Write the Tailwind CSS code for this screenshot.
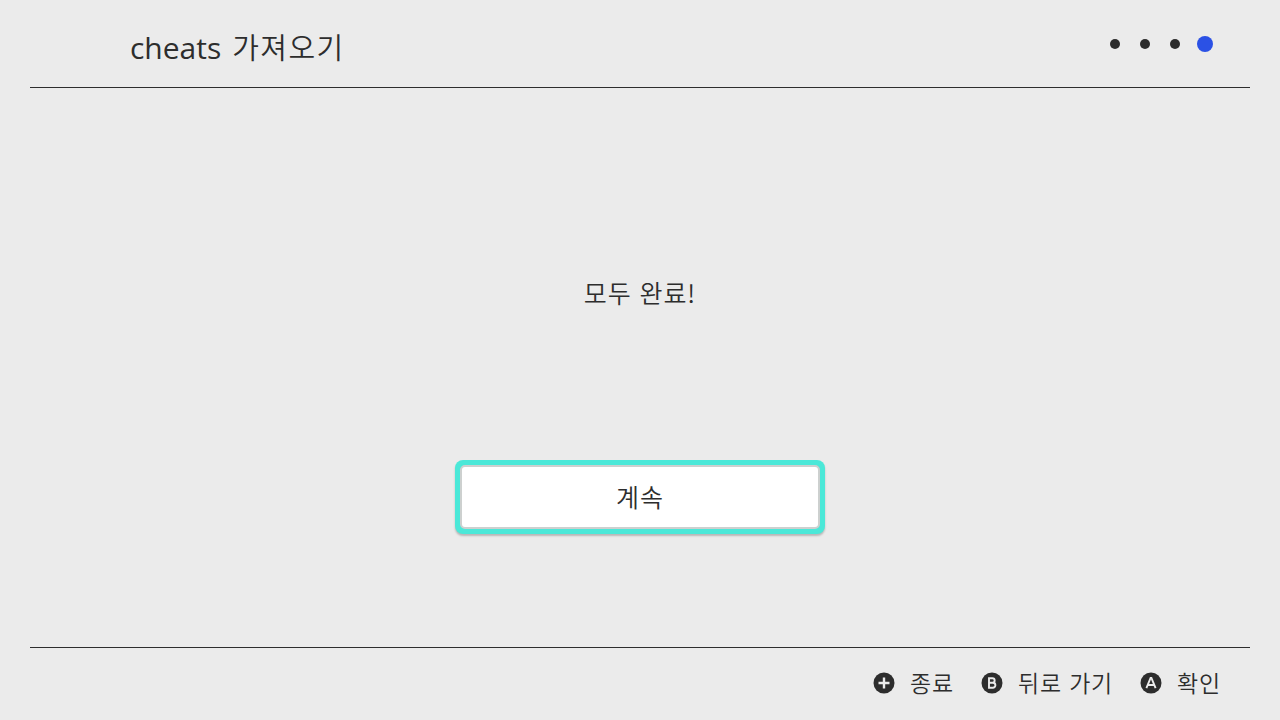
<!DOCTYPE html>
<html lang="ko">
<head>
  <meta charset="UTF-8">
  <title>cheats 가져오기</title>
  <script src="https://cdn.jsdelivr.net/npm/@tailwindcss/browser@4"></script>
</head>
<body class="bg-[#ebebeb] text-[#2d2d2d] font-['Noto_Sans_CJK_KR',sans-serif] font-[350] w-[1280px] h-screen px-[30px] flex flex-col overflow-hidden">

  <header class="h-[88px] shrink-0 border-b border-[#2d2d2d] flex justify-between pl-[100px] pr-[37px]">
    <h1 class="text-[29px] leading-[44px] pt-[24px] whitespace-pre"><span class="font-['Open_Sans'] font-normal text-[30px]">cheats</span><span class="ml-[11px] tracking-[1.4px]">가져오기</span></h1>
    <div class="flex items-center gap-5 h-4 mt-9">
      <span class="size-[10px] rounded-full bg-[#2d2d2d]"></span>
      <span class="size-[10px] rounded-full bg-[#2d2d2d]"></span>
      <span class="size-[10px] rounded-full bg-[#2d2d2d]"></span>
      <span class="size-4 -ml-[3px] rounded-full bg-[#2b51e5]"></span>
    </div>
  </header>

  <main class="flex-1 flex flex-col items-center">
    <p class="text-[25px] leading-[40px] tracking-[0.9px] mt-[184px]">모두 완료!</p>
    <button class="mt-[148px] w-[370px] h-[74px] rounded-[8px] bg-[#4be8d8] p-[5px] shadow-[0_2px_2px_rgba(0,0,0,0.22)]">
      <span class="flex items-center justify-center h-full rounded-[5px] border-2 border-[#cdd0cf] bg-white pb-[2px] text-[25px] leading-[40px] tracking-[0.9px]">계속</span>
    </button>
  </main>

  <footer class="h-[73px] shrink-0 border-t border-[#2d2d2d] flex justify-end items-start pt-[18px] pr-[29px] text-[23px] tracking-[0.8px] leading-[34px]">
    <div class="flex items-center gap-[15px] mr-[27px]">
      <svg class="size-[22px]" viewBox="0 0 22 22">
        <circle cx="11" cy="11" r="10.5" fill="#2d2d2d"/>
        <path d="M11 5.5v11M5.5 11h11" stroke="#ebebeb" stroke-width="2.4"/>
      </svg>
      <span class="-mt-px">종료</span>
    </div>
    <div class="flex items-center gap-[15px] mr-[27px]">
      <svg class="size-[22px]" viewBox="0 0 22 22">
        <circle cx="11" cy="11" r="10.5" fill="#2d2d2d"/>
        <path d="M8 6.2h3.4a2.2 2.2 0 0 1 0 4.5H8M8 10.7h3.9a2.5 2.5 0 0 1 0 5H8zM8 5.3v11.2" fill="none" stroke="#ebebeb" stroke-width="1.9"/>
      </svg>
      <span class="-mt-px">뒤로 가기</span>
    </div>
    <div class="flex items-center gap-[15px]">
      <svg class="size-[22px]" viewBox="0 0 22 22">
        <circle cx="11" cy="11" r="10.5" fill="#2d2d2d"/>
        <path d="M6.4 16.2L10.6 6h.8l4.2 10.2M7.8 13h6.4" fill="none" stroke="#ebebeb" stroke-width="1.9"/>
      </svg>
      <span class="-mt-px">확인</span>
    </div>
  </footer>

</body>
</html>
